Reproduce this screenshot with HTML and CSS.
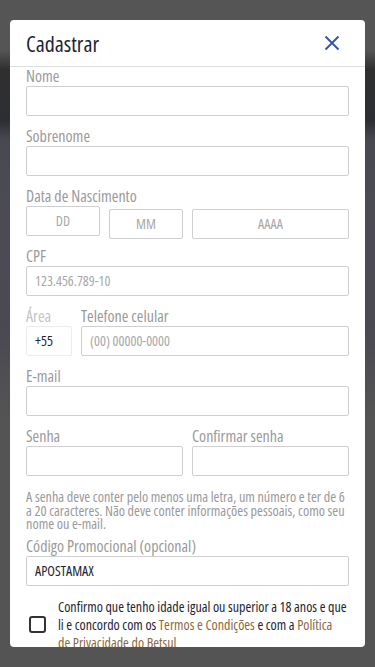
FILE: index.html
```html
<!DOCTYPE html>
<html lang="pt-BR">
<head>
<meta charset="utf-8">
<meta name="viewport" content="width=device-width, initial-scale=1">
<title>Cadastrar</title>
<link rel="stylesheet" href="styles.css">
</head>
<body>
<div class="backdrop"></div>
<div class="modal">
  <div class="modal-header">
    <h1 class="title">Cadastrar</h1>
    <button class="close" aria-label="Fechar">
      <svg width="16" height="16" viewBox="0 0 16 16"><path d="M1.5 1.5L14.5 14.5M14.5 1.5L1.5 14.5" stroke="#3a56a8" stroke-width="2" fill="none"/></svg>
    </button>
  </div>
  <div class="modal-body">
    <div class="field">
      <label class="label">Nome</label>
      <div class="input"></div>
    </div>
    <div class="field">
      <label class="label">Sobrenome</label>
      <div class="input"></div>
    </div>
    <div class="field date">
      <label class="label">Data de Nascimento</label>
      <div class="date-row">
        <div class="input center dd">DD</div>
        <div class="input center mm">MM</div>
        <div class="input center yy">AAAA</div>
      </div>
    </div>
    <div class="field">
      <label class="label">CPF</label>
      <div class="input ph">123.456.789-10</div>
    </div>
    <div class="phone-row">
      <div class="field area">
        <label class="label light">Área</label>
        <div class="input light-border value">+55</div>
      </div>
      <div class="field grow">
        <label class="label">Telefone celular</label>
        <div class="input ph">(00) 00000-0000</div>
      </div>
    </div>
    <div class="field">
      <label class="label">E-mail</label>
      <div class="input"></div>
    </div>
    <div class="pass-row">
      <div class="field">
        <label class="label">Senha</label>
        <div class="input"></div>
      </div>
      <div class="field">
        <label class="label">Confirmar senha</label>
        <div class="input"></div>
      </div>
    </div>
    <p class="help">A senha deve conter pelo menos uma letra, um número e ter de 6 a 20 caracteres. Não deve conter informações pessoais, como seu nome ou e-mail.</p>
    <div class="field">
      <label class="label">Código Promocional (opcional)</label>
      <div class="input value">APOSTAMAX</div>
    </div>
    <div class="terms">
      <span class="checkbox"></span>
      <p class="terms-text">Confirmo que tenho idade igual ou superior a 18 anos e que li e concordo com os <a class="link">Termos e Condições</a> e com a <a class="link">Política de&nbsp;Privacidade do Betsul</a></p>
    </div>
  </div>
</div>
</body>
</html>
```
FILE: styles.css
```css
* { box-sizing: border-box; }
html, body { margin: 0; padding: 0; }
body {
  width: 375px;
  height: 667px;
  overflow: hidden;
  background: #545454;
  font-family: "Open Sans", "Noto Sans", sans-serif;
  font-stretch: 75%;
  position: relative;
}
.backdrop {
  position: absolute;
  inset: 0;
  background: linear-gradient(180deg, #555 0px, #555 50px, #2f2f2f 70px, #2c2e33 120px, #484950 140px, #4c4b55 240px, #4a4952 330px, #545454 420px, #545454 100%);
}
.modal {
  position: absolute;
  left: 10px;
  top: 20px;
  width: 355px;
  height: 627px;
  background: #fff;
  border-radius: 4px;
  overflow: hidden;
  display: flex;
  flex-direction: column;
}
.modal-header {
  height: 47px;
  flex: none;
  display: flex;
  align-items: center;
  justify-content: space-between;
  padding: 0 16px;
  border-bottom: 1px solid #dedede;
}
.title {
  margin: 0;
  font-size: 22px;
  font-weight: normal;
  color: #1d2433;
}
.close {
  border: 0;
  background: none;
  padding: 0;
  margin-right: 9px;
  width: 16px;
  height: 16px;
  display: flex;
}
.modal-body {
  padding: 0 16px 0;
  display: flex;
  flex-direction: column;
}
.field {
  display: flex;
  flex-direction: column;
  margin-bottom: 11px;
}
.field.date { margin-bottom: 8px; }
.label {
  font-size: 16px;
  color: #9a9a9a;
  line-height: 18px;
  margin-bottom: 1px;
}
.label.light { color: #c4c4c4; }
.input {
  height: 30px;
  border: 1px solid #cfcfcf;
  border-radius: 2px;
  font-size: 14px;
  line-height: 28px;
  padding: 0 8px;
  color: #a8a8a8;
}
.input.light-border { border-color: #ececec; }
.input.value { color: #1d2433; }
.input.center { text-align: center; }
.date-row {
  display: flex;
  gap: 9px;
  align-items: flex-start;
}
.dd { width: 74px; }
.mm { width: 74px; margin-top: 3px; }
.yy { flex: 1; margin-top: 3px; }
.phone-row {
  display: flex;
  gap: 9px;
}
.area { width: 46px; }
.grow { flex: 1; }
.pass-row {
  display: grid;
  grid-template-columns: 1fr 1fr;
  gap: 9px;
}
.help {
  margin: 3px 0 6px;
  font-size: 14.2px;
  line-height: 13.5px;
  color: #9a9a9a;
}
.terms {
  display: flex;
  align-items: center;
  gap: 12px;
  padding-left: 3px;
  margin-top: 1px;
}
.checkbox {
  flex: none;
  width: 17px;
  height: 17px;
  border: 2px solid #333;
  border-radius: 3px;
}
.terms-text {
  margin: 0;
  font-size: 14px;
  line-height: 18px;
  color: #1d2433;
}
.link { color: #8a6a3c; text-decoration: none; }
```
